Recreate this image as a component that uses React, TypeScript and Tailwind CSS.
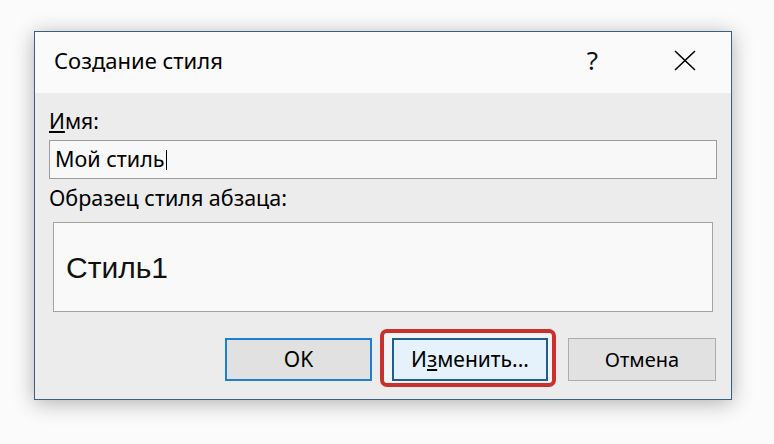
export default function App() {
  const ui = { fontFamily: '"Noto Sans", "Open Sans", "DejaVu Sans", sans-serif' };

  return (
    <div className="w-[774px] h-[444px] bg-[#fbfbfb] pt-[31px] pl-[34px]" style={ui}>
      {/* Dialog */}
      <div className="w-[698px] h-[369px] border border-[#38617f] bg-[#ececec] shadow-[0_3px_20px_rgba(0,0,0,0.3)] flex flex-col">
        {/* Title bar */}
        <div className="h-[61px] bg-[#fafafa] flex items-center pl-[19px] pr-[35px] pb-[5px]">
          <span className="text-[22px] text-black flex-1 leading-none">Создание стиля</span>
          <span className="text-[26px] text-[#111] leading-none mr-[76px]">?</span>
          <svg width="22" height="21" viewBox="0 0 22 21" className="text-black">
            <path d="M1 1 L21 20 M21 1 L1 20" stroke="currentColor" strokeWidth="1.6" fill="none" />
          </svg>
        </div>

        {/* Body */}
        <div className="flex-1 flex flex-col px-[14px] pt-[15px]">
          <label className="text-[21px] leading-[26px] text-black">
            <span className="underline underline-offset-2">И</span>мя:
          </label>
          <div className="mt-[6px] h-[39px] border border-[#9c9c9c] bg-[#f8f8f8] flex items-center pl-[5px]">
            <span className="text-[21.5px] text-black">Мой стиль</span>
            <span className="w-px h-[20px] bg-black ml-[1px]" />
          </div>

          <label className="mt-[6px] text-[21.5px] leading-[26px] text-black">Образец стиля абзаца:</label>
          <div className="mt-[11px] mx-[4px] h-[90px] border border-[#a3a3a3] bg-[#f9f9f9] flex items-center pl-[12px]">
            <span
              className="text-[30px] text-[#111]"
              style={{ fontFamily: '"Liberation Sans", Arial, sans-serif' }}
            >
              Стиль1
            </span>
          </div>

          {/* Buttons */}
          <div className="mt-[26px] flex justify-end gap-[20px] pr-px">
            <button className="w-[147px] h-[43px] border-2 border-[#1b7fd3] bg-[#e1e1e1] text-[21px] text-black">
              OK
            </button>
            <div className="relative">
              <div className="absolute -left-[12px] -right-[8px] -top-[9px] -bottom-[6px] rounded-[7px] border-[4px] border-[#c8312d] bg-[#f4f4f4]" />
              <button className="relative w-[156px] h-[43px] border-2 border-[#1f5f8c] bg-[#e5f1fb] text-[21px] text-black">
                И<span className="underline underline-offset-2">з</span>менить...
              </button>
            </div>
            <button className="w-[148px] h-[43px] border border-[#adadad] bg-[#e1e1e1] text-[20px] text-black">
              Отмена
            </button>
          </div>
        </div>
      </div>
    </div>
  );
}
